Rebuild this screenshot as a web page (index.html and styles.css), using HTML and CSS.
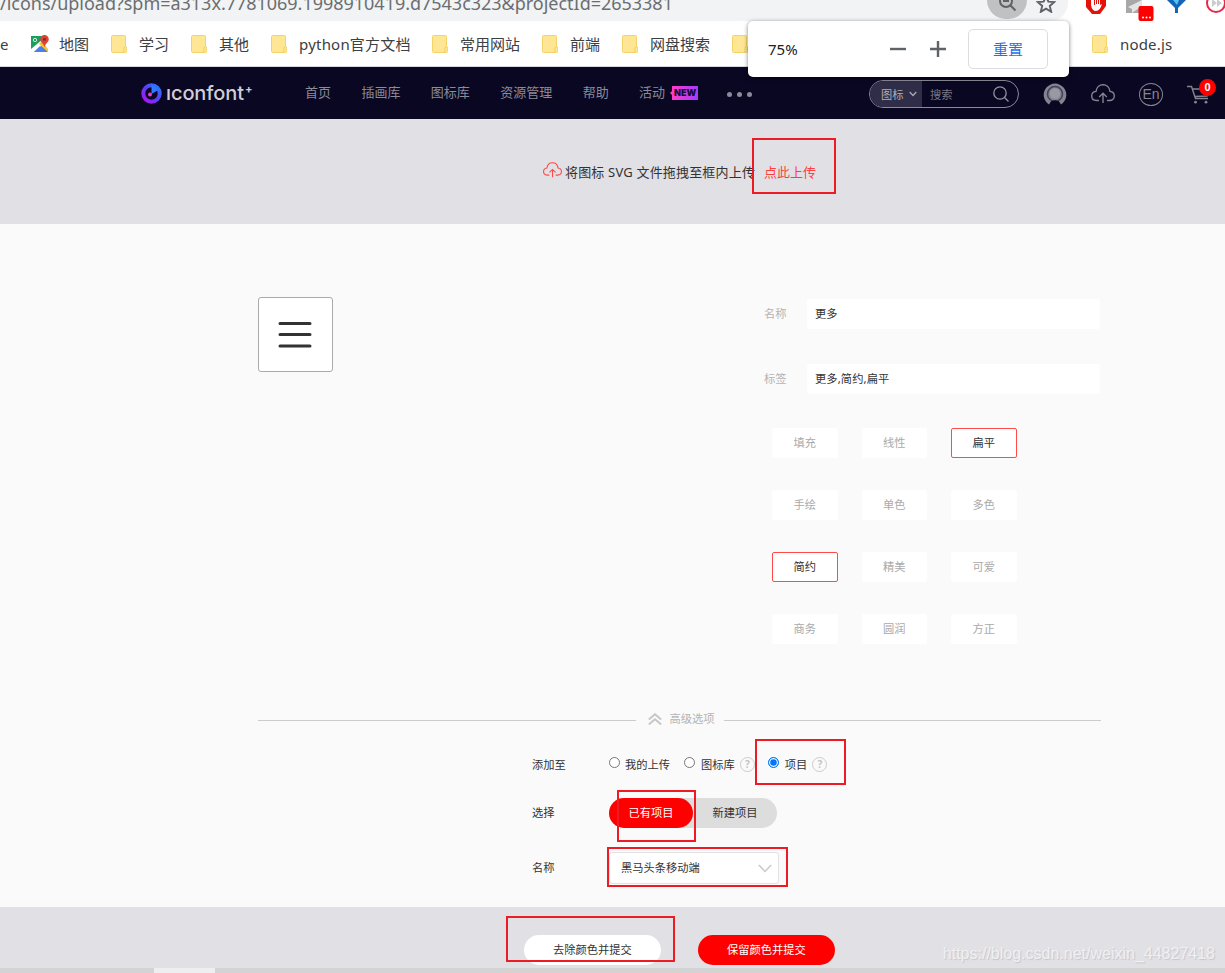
FILE: index.html
```
<!DOCTYPE html>
<html lang="zh-CN">
<head>
    <meta charset="UTF-8">
    <meta name="viewport" content="width=device-width, initial-scale=1.0">
    <title>iconfont</title>
    <link rel="stylesheet" href="styles.css">
</head>
<body>
    <svg class="defs" width="0" height="0">
        <symbol id="folder" viewBox="0 0 16 18">
            <path d="M1.5.5h12q1 0 1 1V11.500q1.200 0 1.200 1.500v3q0 1.500-1.500 1.500H1.500q-1 0-1-1v-15q0-1 1-1z" fill="#ffe694" stroke="#f4d469"/>
            <path d="M14.500 11.500q-1.500 0-1.500 2v2q0 1.500-1.500 2" fill="none" stroke="#f2cd55"/>
        </symbol>
        <symbol id="cloud" viewBox="0 0 24 20">
            <path d="M8 16.500H5.500C2.500 16.500.7 14.500.7 12s1.800-4.300 4.300-4.600C5.500 3.500 8.500.8 12 .8s6.500 2.700 7 6.600c2.500.3 4.300 2.200 4.300 4.600s-1.800 4.500-4.800 4.500H16M12 19V9.500M8.200 13L12 9.300l3.800 3.700" fill="none" stroke="currentColor" stroke-width="1.400"/>
        </symbol>
    </svg>

    <div class="address">
        <div class="url">
            <span class="url-text">/icons/upload?spm=a313x.7781069.1998910419.d7543c323&amp;projectId=2653381</span>
            <span class="zoom-btn">
                <svg width="20" height="20" viewBox="0 0 20 20" fill="none" stroke="#5f6368" stroke-width="2"><circle cx="8" cy="8" r="6"/><path d="M12.500 12.500l5 5M5 8h6"/></svg>
            </span>
            <svg class="star" width="20" height="19" viewBox="0 0 18 17" fill="none" stroke="#5f6368" stroke-width="1.700"><path d="M9 1.800l2.100 5 5.400.4-4.100 3.500 1.300 5.300L9 13.200 4.300 16l1.300-5.300L1.500 7.200l5.400-.4z"/></svg>
        </div>
        <div class="extensions">
            <svg width="139" height="21" viewBox="0 0 139 21">
                <path d="M0-6h20V6l-6 8H6L0 7z" fill="#e3120b"/>
                <path d="M5 0v5q1 6 5 6t6-7l-2 1V0h-1v4h-1V0h-1v4h-1V0H9v5H8V0z" fill="#fff"/>
                <path d="M40 0h16v13H40z" fill="#a8a8a8"/>
                <path d="M42 7L56 0v6l-10 7v-4z" fill="#e4e4e4"/>
                <rect x="52.500" y="6" width="15" height="15" rx="2" fill="#f00"/>
                <g fill="#fff"><circle cx="57" cy="17.500" r="1"/><circle cx="60.500" cy="17.500" r="1"/><circle cx="64" cy="17.500" r="1"/></g>
                <path d="M81 0h19l-8 8v5h-3V8z" fill="#1565b5"/>
                <path d="M87 0h6l-2 5z" fill="#55c3f5"/>
                <circle cx="130" cy="3" r="9" fill="#fff" stroke="#e6284b" stroke-width="2"/>
                <path d="M126-1l5 4-5 4zM131-1l5 4-5 4z" fill="#ccc"/>
            </svg>
        </div>
    </div>

    <div class="bookmarks">
        <span class="bm-first">e</span>
        <div class="bm map">
            <svg width="18" height="18" viewBox="0 0 18 18">
                <path d="M0 1h14v16H0z" fill="#1e9d5c"/>
                <path d="M0 17L10 8l7 9z" fill="#4a80ec"/>
                <path d="M0 17v-3L12 4l3 3L3 17z" fill="#fff"/>
                <path d="M8 9l3-3 6 8v3z" fill="#f6c52c"/>
                <path d="M3 17l6-6 6 6z" fill="#4a80ec"/>
                <circle cx="4" cy="5" r="1.700" fill="none" stroke="#d5efe0"/>
                <path d="M13.500 0a4.300 4.300 0 0 1 4.300 4.300c0 3-3.500 4-4.300 8-.8-4-4.300-5-4.300-8A4.300 4.300 0 0 1 13.500 0z" fill="#dc4437"/>
                <circle cx="13.500" cy="4.300" r="1.500" fill="#8c2a22"/>
            </svg>
            <span>地图</span>
        </div>
        <div class="bm"><svg width="16" height="18"><use href="#folder"/></svg><span>学习</span></div>
        <div class="bm"><svg width="16" height="18"><use href="#folder"/></svg><span>其他</span></div>
        <div class="bm"><svg width="16" height="18"><use href="#folder"/></svg><span class="bm-python">python官方文档</span></div>
        <div class="bm"><svg width="16" height="18"><use href="#folder"/></svg><span>常用网站</span></div>
        <div class="bm"><svg width="16" height="18"><use href="#folder"/></svg><span>前端</span></div>
        <div class="bm"><svg width="16" height="18"><use href="#folder"/></svg><span>网盘搜索</span></div>
        <div class="bm bm-wide"><svg width="16" height="18"><use href="#folder"/></svg></div>
        <div class="bm"><svg width="16" height="18"><use href="#folder"/></svg><span class="bm-node">node.js</span></div>
    </div>

    <div class="zoom-popup">
        <span class="zoom-value">75%</span>
        <svg width="16" height="16" viewBox="0 0 16 16"><path d="M0 8h16" stroke="#5f6368" stroke-width="2.400"/></svg>
        <svg width="16" height="16" viewBox="0 0 16 16"><path d="M0 8h16M8 0v16" stroke="#5f6368" stroke-width="2.400"/></svg>
        <button class="reset">重置</button>
    </div>

    <header class="nav">
        <div class="logo">
            <svg width="21" height="21" viewBox="0 0 21 21">
                <defs>
                    <linearGradient id="ring" x1="1" y1="0" x2="0" y2="1">
                        <stop offset="0" stop-color="#2a7bff"/>
                        <stop offset=".5" stop-color="#5b3cf5"/>
                        <stop offset="1" stop-color="#b411f5"/>
                    </linearGradient>
                </defs>
                <circle cx="10.500" cy="10.500" r="8.200" fill="none" stroke="url(#ring)" stroke-width="4"/>
                <path d="M10.500 2.500v8.500l6-3.500-2-4z" fill="#2a7bff"/>
                <circle cx="9" cy="11.500" r="2" fill="#f03cc8"/>
            </svg>
            <span class="logo-text">ıconfont</span><span class="logo-plus">+</span>
        </div>
        <nav class="menu">
            <a>首页</a>
            <a>插画库</a>
            <a>图标库</a>
            <a>资源管理</a>
            <a>帮助</a>
            <a>活动</a>
        </nav>
        <span class="new">NEW</span>
        <span class="dots"><i></i><i></i><i></i></span>
        <div class="search">
            <span class="search-type">图标
                <svg width="8" height="6" viewBox="0 0 8 6"><path d="M.7 1L4 4.500 7.300 1" fill="none" stroke="#aaa9b5" stroke-width="1.300"/></svg>
            </span>
            <span class="search-text">搜索</span>
            <svg width="16" height="16" viewBox="0 0 16 16" fill="none" stroke="#9493a0" stroke-width="1.300"><circle cx="7" cy="7" r="6.200"/><path d="M11.500 11.500l4 4"/></svg>
        </div>
        <div class="tools">
            <svg width="24" height="22" viewBox="0 0 24 22">
                <path d="M6 21.500A11.300 11.300 0 1 1 18 21.500l-2.500-4h-7z" fill="#858491"/>
                <circle cx="12" cy="11" r="7.500" fill="none" stroke="#43415a" stroke-width="1.500"/>
                <circle cx="12" cy="10.500" r="5.200" fill="#9998a3"/>
                <path d="M8.500 22v-3.500q3.500-2 7 0V22z" fill="#0a0722"/>
            </svg>
            <svg width="24" height="20"><use href="#cloud"/></svg>
            <span class="lang">En</span>
            <span class="cart">
                <svg width="24" height="20" viewBox="0 0 24 20" fill="none" stroke="#858491" stroke-width="1.400"><path d="M0 2.500h4.500l4 12h12.500M5.500 5h16.500l-2 7-12 .5"/><g fill="#858491" stroke="none"><circle cx="8.500" cy="18.200" r="1.400"/><circle cx="19" cy="18.200" r="1.400"/></g></svg>
                <b class="badge">0</b>
            </span>
        </div>
    </header>

    <section class="upload">
        <svg width="19" height="16" viewBox="0 0 24 20"><use href="#cloud"/></svg>
        <span class="upload-tip">将图标 SVG 文件拖拽至框内上传</span>
        <a class="upload-link">点此上传</a>
    </section>

    <main>
        <div class="edit">
            <div class="preview">
                <svg width="34" height="28" viewBox="0 0 34 28" stroke="#333" stroke-width="3" stroke-linecap="round"><path d="M2 2.500h30M2 13.500h30M2 25h30"/></svg>
            </div>
            <div class="info">
                <div class="field"><label>名称</label><div class="input">更多</div></div>
                <div class="field"><label>标签</label><div class="input">更多,简约,扁平</div></div>
                <div class="tags">
                    <span class="tag">填充</span>
                    <span class="tag">线性</span>
                    <span class="tag active">扁平</span>
                    <span class="tag">手绘</span>
                    <span class="tag">单色</span>
                    <span class="tag">多色</span>
                    <span class="tag active">简约</span>
                    <span class="tag">精美</span>
                    <span class="tag">可爱</span>
                    <span class="tag">商务</span>
                    <span class="tag">圆润</span>
                    <span class="tag">方正</span>
                </div>
            </div>
        </div>

        <div class="divider">
            <svg width="14" height="12" viewBox="0 0 14 12" fill="none" stroke="#c5c5c8" stroke-width="1.800"><path d="M.8 6.500L7 1.200l6.200 5.300M.8 11.500L7 6.200l6.200 5.300"/></svg>
            <span>高级选项</span>
        </div>

        <div class="options">
            <div class="row">
                <span class="row-label">添加至</span>
                <div class="radios">
                    <i class="radio"></i><span>我的上传</span>
                    <i class="radio second"></i><span>图标库</span><i class="help">?</i>
                    <i class="radio third checked"></i><span>项目</span><i class="help">?</i>
                </div>
            </div>
            <div class="row row-switch">
                <span class="row-label">选择</span>
                <div class="switch">
                    <span class="on">已有项目</span>
                    <span class="off">新建项目</span>
                </div>
            </div>
            <div class="row row-select">
                <span class="row-label">名称</span>
                <div class="select">
                    <span>黑马头条移动端</span>
                    <svg width="14" height="9" viewBox="0 0 14 9"><path d="M.8 1L7 7.500 13.200 1" fill="none" stroke="#c9c9c9" stroke-width="1.500"/></svg>
                </div>
            </div>
        </div>
    </main>

    <footer>
        <button class="btn">去除颜色并提交</button>
        <button class="btn btn-red">保留颜色并提交</button>
    </footer>
    <div class="taskbar"><span></span></div>

    <div class="mark mark-link"></div>
    <div class="mark mark-project"></div>
    <div class="mark mark-exist"></div>
    <div class="mark mark-select"></div>
    <div class="mark mark-submit"></div>
    <span class="watermark">https://blog.csdn.net/weixin_44827418</span>
</body>
</html>
```
FILE: styles.css
```
* {
    box-sizing: border-box;
}

body {
    position: relative;
    margin: 0;
    height: 973px;
    overflow: hidden;
    font-family: "Noto Sans", "Noto Sans CJK SC", sans-serif;
    font-size: 11.25px;
    color: #333;
    background-color: #fafafa;
}

svg {
    display: block;
    flex-shrink: 0;
}

span, label, a {
    white-space: nowrap;
}

i {
    font-style: normal;
}

.defs {
    position: absolute;
}

/* browser bars */
.address {
    display: flex;
    height: 21px;
    background-color: #fff;
    overflow: hidden;
}

.url {
    display: flex;
    width: 1068px;
    height: 21px;
    background-color: #f1f3f4;
    border-bottom-right-radius: 18px;
}

.url-text {
    width: 987px;
    margin-top: -11px;
    font-size: 18px;
    line-height: 28px;
    letter-spacing: -0.02px;
    color: #6a6e72;
}

.zoom-btn {
    width: 40px;
    height: 38px;
    margin-top: -19px;
    padding: 12px 0 0 11px;
    border-radius: 20px;
    background-color: #bfc1c2;
}

.star {
    margin: -6px 0 0 9px;
}

.extensions {
    margin-left: 18px;
}

.bookmarks {
    display: flex;
    align-items: center;
    height: 46px;
    background-color: #fff;
    border-bottom: 1px solid #d5dadd;
    font-size: 15px;
    color: #3c4043;
}

.bm-first {
    width: 31px;
}

.bm {
    display: flex;
    align-items: center;
    gap: 12px;
    margin-right: 22px;
}

.map {
    gap: 10px;
}

.bm-python {
    width: 111px;
    letter-spacing: 0.2px;
}

.bm-node {
    letter-spacing: 0.15px;
}

.bm-wide {
    width: 338px;
}

.zoom-popup {
    position: absolute;
    left: 748px;
    top: 21px;
    z-index: 2;
    display: flex;
    align-items: center;
    gap: 24px;
    width: 321px;
    height: 56px;
    padding-left: 20px;
    border-radius: 5px;
    background-color: #fff;
    box-shadow: 0 1px 4px rgba(0, 0, 0, 0.5);
    color: #202124;
}

.zoom-value {
    width: 98px;
    font-size: 15px;
}

.reset {
    width: 80px;
    height: 40px;
    margin-left: -2px;
    padding: 0 0 2px;
    border: 1px solid #dadce0;
    border-radius: 5px;
    background-color: #fff;
    font: 15px "Noto Sans CJK SC", sans-serif;
    color: #1a73e8;
}

/* site header */
.nav {
    display: flex;
    align-items: center;
    height: 52px;
    padding-left: 141px;
    background-color: #0a0722;
    color: #8b8a97;
}

.logo {
    display: flex;
    align-items: center;
    width: 164px;
    color: #cfced8;
}

.logo-text {
    margin: -1px 0 0 4px;
    font: 500 20px "Inter", sans-serif;
    letter-spacing: -0.1px;
}

.logo-plus {
    margin: -9px 0 0 1px;
    font: 700 11px "Inter", sans-serif;
}

.menu {
    display: flex;
    gap: 30.4px;
    margin-top: -4px;
    font-size: 13px;
}

.new {
    position: relative;
    width: 26px;
    height: 14px;
    margin-left: 7px;
    background: linear-gradient(90deg, #ff3cc8, #a13cff);
    font: 900 9px/14px "Inter", sans-serif;
    text-align: center;
    color: #160a3a;
}

.new::before {
    content: "";
    position: absolute;
    left: -2px;
    top: 5px;
    border: 2px solid transparent;
    border-left: none;
    border-right-color: #ff3cc8;
}

.dots {
    display: flex;
    gap: 5px;
    width: 142px;
    margin: 3px 0 0 29px;
}

.dots i {
    width: 5px;
    height: 5px;
    border-radius: 50%;
    background-color: #8b8a97;
}

.search {
    display: flex;
    align-items: center;
    width: 150px;
    height: 28px;
    margin-top: 2px;
    border: 1px solid #8b8a97;
    border-radius: 14px;
    overflow: hidden;
}

.search-type {
    display: flex;
    align-items: center;
    gap: 5px;
    width: 52px;
    height: 26px;
    padding-left: 11px;
    background-color: #2f2d47;
    color: #b0afba;
}

.search-text {
    width: 71px;
    padding-left: 8px;
    color: #777683;
}

.tools {
    display: flex;
    align-items: center;
    gap: 24px;
    margin: 2px 0 0 24px;
    color: #858491;
}

.lang {
    width: 24px;
    height: 23px;
    border: 1.5px solid #858491;
    border-radius: 50%;
    font: 14px/21px "Liberation Sans", sans-serif;
    text-align: center;
}

.cart {
    position: relative;
}

.badge {
    position: absolute;
    left: 12px;
    top: -5px;
    width: 17px;
    height: 17px;
    border-radius: 50%;
    background-color: #f00;
    font: 700 11px/17px "Liberation Sans", sans-serif;
    text-align: center;
    color: #fff;
}

/* upload strip */
.upload {
    display: flex;
    align-items: center;
    height: 105px;
    padding: 0 0 1px 543px;
    background-color: #e1e0e5;
    font-size: 13px;
    color: #333;
}

.upload svg {
    margin-top: -2px;
    color: #ff4a4a;
}

.upload-tip {
    width: 199px;
    padding-left: 3px;
    letter-spacing: 0.18px;
}

.upload-link {
    margin-left: 3px;
    color: #ff4040;
}

/* icon form */
main {
    height: 683px;
    padding: 73px 124px 0 258px;
}

.edit {
    display: flex;
    justify-content: space-between;
    height: 416px;
}

.preview {
    display: flex;
    align-items: center;
    justify-content: center;
    width: 75px;
    height: 75px;
    padding: 1px 2px 0 0;
    border: 1px solid #aaa;
    border-radius: 3px;
    background-color: #fff;
}

.info {
    width: 337px;
    padding-top: 2px;
}

.field {
    display: flex;
    align-items: center;
    height: 30px;
    margin-bottom: 35px;
}

.field label {
    width: 43px;
    margin-top: -2px;
    color: #b3b3b3;
}

.input {
    width: 293px;
    height: 30px;
    padding-left: 8px;
    line-height: 30px;
    letter-spacing: 0.1px;
    border-radius: 3px;
    background-color: #fff;
    color: #333;
}

.tags {
    display: grid;
    grid-template-columns: repeat(3, 65.5px);
    gap: 32px 24px;
    margin: -1px 0 0 8px;
}

.tag {
    height: 30px;
    border: 1px solid #fff;
    border-radius: 2px;
    background-color: #fff;
    line-height: 28px;
    text-align: center;
    color: #aaa;
}

.tag.active {
    border-color: #ff4a4a;
    color: #333;
}

.divider {
    display: flex;
    align-items: center;
    height: 14px;
    color: #b3b3b3;
}

.divider::before, .divider::after {
    content: "";
    flex: 1;
    height: 1px;
    background-color: #ccc;
}

.divider svg {
    margin: -2px 8px 0 12px;
}

.divider span {
    margin: -4px 9px 0 0;
}

.options {
    padding: 23px 0 0 274px;
}

.row {
    display: flex;
    align-items: center;
    height: 30px;
}

.row-label {
    width: 77px;
    margin-top: -2px;
}

.row-switch {
    margin-top: 18px;
}

.row-select {
    height: 32px;
    margin-top: 24px;
}

.radios {
    display: flex;
    align-items: center;
    margin-top: -2px;
}

.radio {
    width: 11px;
    height: 11px;
    margin: -4px 5px 0 0;
    border: 1px solid #767676;
    border-radius: 50%;
    background-color: #fff;
}

.radio.second {
    margin-left: 14px;
    margin-right: 6px;
}

.radio.third {
    margin-left: 13px;
    margin-right: 6px;
}

.radio.checked {
    border-color: #0075ff;
    background-color: #0075ff;
    box-shadow: inset 0 0 0 1.2px #fff;
}

.help {
    width: 15px;
    height: 15px;
    margin-left: 5px;
    border: 1px solid #ccc;
    border-radius: 50%;
    font: 700 10px/13px "Noto Sans", sans-serif;
    text-align: center;
    color: #c4c4c4;
}

.switch {
    display: flex;
    width: 168px;
    height: 30px;
    border-radius: 15px;
    background-color: #ddd;
    line-height: 30px;
    text-align: center;
}

.on {
    width: 84px;
    border-radius: 15px;
    background-color: #f00;
    color: #fff;
}

.off {
    width: 84px;
}

.select {
    display: flex;
    align-items: center;
    justify-content: space-between;
    width: 170px;
    height: 32px;
    padding: 0 6px 0 11px;
    border: 1px solid #e2e2e2;
    border-radius: 3px;
    background-color: #fff;
}

.select span {
    margin-top: -3px;
}

/* bottom */
footer {
    display: flex;
    gap: 37px;
    height: 61px;
    padding: 28px 0 0 524px;
    background-color: #e1e0e5;
}

.btn {
    width: 137px;
    height: 30px;
    padding: 0 0 2px;
    border: none;
    border-radius: 15px;
    background-color: #fff;
    font: 11.25px "Noto Sans CJK SC", sans-serif;
    color: #333;
}

.btn-red {
    background-color: #f00;
    color: #fff;
}

.taskbar {
    height: 5px;
    padding-left: 154px;
    background-color: #d3d3d3;
}

.taskbar span {
    display: block;
    width: 61px;
    height: 5px;
    background-color: #eee;
}

.watermark {
    position: absolute;
    right: 10px;
    top: 944px;
    font: 16px/20px "Liberation Sans", sans-serif;
    color: #f0f0f3;
    text-shadow: 1px 1px 1px #c4c4c8;
}

/* red highlight frames */
.mark {
    position: absolute;
    border: 2px solid #ed1c24;
}

.mark-link {
    left: 752px;
    top: 138px;
    width: 84px;
    height: 56px;
}

.mark-project {
    left: 755px;
    top: 739px;
    width: 91px;
    height: 46px;
}

.mark-exist {
    left: 617px;
    top: 790px;
    width: 79px;
    height: 52px;
}

.mark-select {
    left: 607px;
    top: 847px;
    width: 181px;
    height: 40px;
}

.mark-submit {
    left: 506px;
    top: 916px;
    width: 169px;
    height: 46px;
}
```
